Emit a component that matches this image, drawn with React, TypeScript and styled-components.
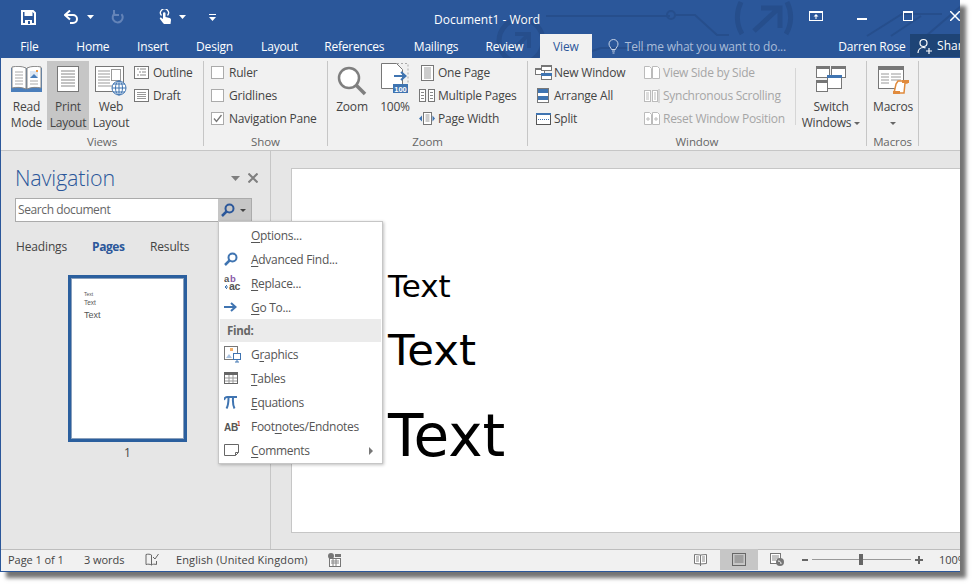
import React from "react";
import styled, { createGlobalStyle } from "styled-components";

const Global = createGlobalStyle`
  html, body { margin: 0; padding: 0; background: #fff; }
  body { min-height: 587px; font-family: "Open Sans", "Noto Sans", "Liberation Sans", sans-serif; font-size: 12px; color: #444; }
  #root { height: 587px; overflow: hidden; }
  svg { display: block; flex: none; }
`;

const Window = styled.div`
  position: relative; width: 960px; height: 572px; box-sizing: border-box; overflow: hidden;
  display: flex; flex-direction: column; background: #e6e6e6;
  border-left: 1px solid #2b579a; border-bottom: 1px solid #2b579a;
  box-shadow: 6px 6px 4px #747474;
`;
const Header = styled.header`
  position: relative; height: 58px; background: #2b579a; color: #fff; flex: none;
`;
const Circuit = styled.svg`position: absolute; left: 0; top: 0;`;
const TitleRow = styled.div`
  position: relative; height: 34px; display: flex; align-items: center;
`;
const Qat = styled.div`display: flex; align-items: center; padding-left: 20px; width: 427px; box-sizing: border-box;`;
const QatBtn = styled.span<{ $w: number }>`display: flex; align-items: center; width: ${p => p.$w}px;`;
const QatGap = styled.span<{ $w: number }>`display: block; width: ${p => p.$w}px;`;
const DocTitle = styled.div`width: 132px; text-align: center; font-size: 12px; margin-top: 4px; white-space: nowrap;`;
const WinControls = styled.div`display: flex; align-items: center; margin-left: 257px; margin-top: -2px;`;
const WinBtn = styled.span<{ $w: number }>`display: flex; width: ${p => p.$w}px;`;
const TabRow = styled.nav`position: relative; display: flex; height: 24px; padding-left: 2px;`;
const Tab = styled.div<{ $w: number; $active?: boolean }>`
  width: ${p => p.$w}px; text-align: center; line-height: 26px; font-size: 12px; letter-spacing: -0.2px;
  ${p => p.$active ? "background: #f1f1f1; color: #2b579a;" : ""}
`;
const TellMe = styled.div`
  display: flex; align-items: center; gap: 6px; padding-left: 16px; width: 247px; box-sizing: border-box;
  color: #a9bcd8; font-size: 12px; letter-spacing: -0.2px;
`;
const User = styled.div`width: 72px; line-height: 26px; letter-spacing: -0.2px;`;
const Share = styled.div`
  display: flex; align-items: center; gap: 5px; width: 50px; height: 23px; padding-left: 7px; box-sizing: border-box;
  background: #1e4476; white-space: nowrap; overflow: hidden;
`;
const Ribbon = styled.section`
  height: 93px; flex: none; box-sizing: border-box; display: flex; background: #f1f1f1;
  border-bottom: 1px solid #c6c6c6; padding-top: 3px;
`;
const Group = styled.div<{ $w: number }>`
  width: ${p => p.$w}px; height: 85px; box-sizing: border-box; flex: none;
  border-right: 1px solid #c6c6c6; display: flex; flex-direction: column;
`;
const GroupBody = styled.div<{ $pl: number }>`height: 73px; display: flex; align-items: flex-start; padding-left: ${p => p.$pl}px;`;
const GroupLabel = styled.div`height: 12px; line-height: 16px; text-align: center; color: #666; font-size: 11.5px; letter-spacing: -0.1px;`;
const BigBtn = styled.div<{ $w: number; $on?: boolean; $ml?: number }>`
  width: ${p => p.$w}px; height: 69px; display: flex; flex-direction: column; align-items: center; flex: none;
  background: ${p => p.$on ? "#c6c6c6" : "transparent"}; margin-right: 2px; margin-left: ${p => p.$ml ?? 0}px;
  white-space: nowrap;
`;
const BigIcon = styled.div<{ $pt?: number }>`height: 38px; flex: none; box-sizing: border-box; padding-top: ${p => p.$pt ?? 5}px;`;
const BigText = styled.div`line-height: 16px; text-align: center; letter-spacing: -0.2px;`;
const Caret = styled.span<{ $ml?: number }>`
  display: inline-block; width: 0; height: 0; border: 3px solid transparent; border-top: 3px solid #666; border-bottom: 0; vertical-align: 2px; margin-left: ${p => p.$ml ?? 3}px;
`;
const Stack = styled.div<{ $ml?: number; $w?: number }>`
  display: flex; flex-direction: column; flex: none; margin-left: ${p => p.$ml ?? 0}px;
  ${p => p.$w ? `width: ${p.$w}px;` : ""}
`;
const Small = styled.div<{ $dis?: boolean; $gap?: number }>`
  height: 23px; display: flex; align-items: center; gap: ${p => p.$gap ?? 4}px; white-space: nowrap;
  letter-spacing: ${p => p.$dis ? "-0.27px" : "-0.22px"};
  color: ${p => p.$dis ? "#a6a6a6" : "#444"};
`;
const SmallIcon = styled.span`width: 16px; display: flex; justify-content: center; flex: none;`;
const Check = styled.span`
  width: 11px; height: 11px; border: 1px solid #ababab; background: #fff; flex: none; display: block; position: relative;
`;
const WinSep = styled.div`width: 1px; height: 57px; background: #d6d6d6; margin: 7px 0 0 7px; flex: none;`;

const Body = styled.div`flex: 1; display: flex; min-height: 0; position: relative;`;
const Nav = styled.aside`
  width: 270px; flex: none; box-sizing: border-box; border-right: 1px solid #c6c6c6; padding: 13px 0 0 14px; background: #e6e6e6;
`;
const NavHead = styled.div`display: flex; align-items: center; height: 28px;`;
const NavTitle = styled.div`font-size: 21.5px; font-weight: 300; color: #2b579a; width: 216px; line-height: 28px; letter-spacing: -0.15px;`;
const NavHeadGap = styled.span`display: block; width: 8px;`;
const Search = styled.div`
  width: 237px; height: 24px; box-sizing: border-box; margin-top: 6px; display: flex; border: 1px solid #ababab; background: #fff;
`;
const SearchInput = styled.div`flex: 1; padding-left: 2px; line-height: 21px; color: #666; letter-spacing: -0.4px;`;
const SearchBtn = styled.div`width: 33px; background: #c6c6c6; display: flex; align-items: center; gap: 5px; padding-left: 3px; box-sizing: border-box;`;
const NavTabs = styled.div`display: flex; margin-top: 13px; height: 24px; line-height: 24px; margin-left: 1px;`;
const NavTab = styled.div<{ $w: number; $on?: boolean }>`
  width: ${p => p.$w}px; font-weight: ${p => p.$on ? 700 : 400}; color: ${p => p.$on ? "#2b579a" : "#444"}; letter-spacing: ${p => p.$on ? "-0.4px" : "-0.15px"};
`;
const Thumb = styled.div`
  margin: 16px 0 0 53px; width: 119px; height: 167px; box-sizing: border-box; border: 3px solid #2b5f9e; outline: 1px solid #e6e6e6;
  box-shadow: inset 0 0 0 1px #8aa0bc; background: #fff; padding: 13px 0 0 13px; color: #555; font-family: "Liberation Sans", sans-serif;
`;
const ThumbLine = styled.div<{ $s: number; $h: number }>`font-size: ${p => p.$s}px; line-height: ${p => p.$h}px;`;
const ThumbNum = styled.div`width: 119px; margin-left: 53px; text-align: center; line-height: 16px; margin-top: 3px;`;

const Main = styled.main`flex: 1; padding: 17px 0 0 20px; min-width: 0;`;
const Page = styled.div`
  height: 365px; box-sizing: border-box; background: #fff; border: 1px solid #c6c6c6; border-right: 0; padding: 96px 0 0 96px;
  font-family: "DejaVu Sans", sans-serif; color: #000;
`;
const DocLine = styled.div<{ $s: number; $h: number }>`font-size: ${p => p.$s}px; line-height: ${p => p.$h}px;`;

const Menu = styled.div`
  position: absolute; left: 217px; top: 70px; width: 165px; height: 243px; box-sizing: border-box; background: #fff;
  border: 1px solid #c6c6c6; box-shadow: 1px 1px 3px rgba(0,0,0,.25); padding: 1px 1px 0; z-index: 3;
`;
const MenuItem = styled.div`
  height: 24px; display: flex; align-items: center; position: relative; letter-spacing: -0.3px; color: #555;
  u { text-underline-offset: 2px; }
`;
const MenuIcon = styled.span`width: 30px; padding-left: 3px; box-sizing: border-box; flex: none; display: flex; margin-left: 1px;`;
const MenuHead = styled.div`height: 23px; line-height: 23px; background: #ebebeb; padding-left: 7px; font-weight: 700; color: #666; letter-spacing: -0.3px; font-size: 11.5px;`;
const MenuArrow = styled.span`
  position: absolute; right: 8px; top: 9px; width: 0; height: 0; border: 4px solid transparent; border-left: 4px solid #777; border-right: 0;
`;

const Status = styled.footer`
  height: 22px; flex: none; box-sizing: border-box; background: #f1f1f1; border-top: 1px solid #bdbdbd; display: flex; align-items: center;
  color: #444; font-size: 11px; position: relative; padding-bottom: 2px;
`;
const StatText = styled.span<{ $w: number; $pl?: number; $ls?: number }>`display: flex; align-items: center; width: ${p => p.$w}px; padding-left: ${p => p.$pl ?? 0}px; flex: none; box-sizing: border-box; letter-spacing: ${p => p.$ls ?? -0.05}px; white-space: nowrap;`;
const ViewBtn = styled.span<{ $on?: boolean; $w: number; $ml?: number; $mr?: number }>`
  width: ${p => p.$w}px; height: 21px; display: flex; align-items: center; justify-content: center; flex: none; background: ${p => p.$on ? "#c6c6c6" : "transparent"};
  margin: 0 ${p => p.$mr ?? 0}px 0 ${p => p.$ml ?? 0}px;
`;
const Slider = styled.div`
  width: 99px; height: 1px; background: #999; position: relative; flex: none; margin: 0 4px;
`;
const Thumbler = styled.span`position: absolute; left: 47px; top: -5px; width: 4px; height: 11px; background: #666;`;

const Blue = "#3f74b1";

const SaveIcon = () => <svg width="15" height="15" viewBox="0 0 15 15"><path d="M1 1h11l2 2v11H1z" fill="none" stroke="#fff" strokeWidth="2" /><rect x="3.5" y="1" width="8" height="5" fill="#fff" /><rect x="4" y="10" width="7" height="4" fill="#fff" /><rect x="7" y="11" width="2" height="3" fill="#2b579a" /></svg>;
const UndoIcon = () => <svg width="15" height="14" viewBox="0 0 15 14"><path d="M2 5h7a4 4 0 0 1 0 8H6" fill="none" stroke="#fff" strokeWidth="2" /><path d="M6 0.5 1 5l5 4.5" fill="none" stroke="#fff" strokeWidth="2" /></svg>;
const RedoIcon = () => <svg width="14" height="14" viewBox="0 0 14 14"><path d="M4 3.200a5 5 0 1 0 6.500 1" fill="none" stroke="#6484b8" strokeWidth="2" /><path d="M3 0v5h5" fill="none" stroke="#6484b8" strokeWidth="2" /></svg>;
const TouchIcon = () => <svg width="15" height="17" viewBox="0 0 15 17"><path d="M5 14 2 10c-.7-1 .7-2 1.500-1L5 10V4.500a1.200 1.200 0 0 1 2.500 0V8l4 1c1 .3 1.500 1 1.500 2l-.5 4H6z" fill="#fff" /><path d="M3.500 6.500a4 4 0 1 1 6 0" fill="none" stroke="#fff" strokeWidth="1.300" /></svg>;
const WhiteCaret = () => <svg width="7" height="4" viewBox="0 0 7 4"><path d="M0 0h7L3.500 4z" fill="#fff" /></svg>;
const QatCustom = () => <svg width="7" height="7" viewBox="0 0 7 7"><rect y="0" width="7" height="1" fill="#fff" /><path d="M0 3h7L3.500 7z" fill="#fff" /></svg>;
const RibbonDisp = () => <svg width="14" height="10" viewBox="0 0 14 10"><rect x=".5" y=".5" width="13" height="9" fill="none" stroke="#fff" /><rect x="0" y="0" width="14" height="2" fill="#fff" /><path d="M7 3 4.500 5.500h2V8h1V5.500h2z" fill="#fff" /></svg>;
const Minimize = () => <svg width="10" height="10" viewBox="0 0 10 10"><rect y="7" width="10" height="2" fill="#fff" /></svg>;
const Maximize = () => <svg width="10" height="10" viewBox="0 0 10 10"><rect x=".5" y=".5" width="9" height="9" fill="none" stroke="#fff" /><rect width="10" height="2" fill="#fff" /></svg>;
const CloseX = () => <svg width="10" height="10" viewBox="0 0 10 10"><path d="M0 0l10 10M10 0 0 10" stroke="#fff" strokeWidth="1.500" /></svg>;
const Bulb = () => <svg width="11" height="15" viewBox="0 0 11 15"><path d="M3.500 10.500C3 8.500 1 7.500 1 5a4.500 4.500 0 0 1 9 0c0 2.500-2 3.500-2.500 5.500z" fill="none" stroke="#c7d3e6" /><path d="M4 12h3M4.500 14h2" stroke="#c7d3e6" /></svg>;
const Person = () => <svg width="15" height="16" viewBox="0 0 15 16"><circle cx="6.500" cy="5" r="3.500" fill="none" stroke="#fff" strokeWidth="1.200" /><path d="M1 15c0-3 2-5.500 5.500-5.500 1 0 1.500.2 2 .4" fill="none" stroke="#fff" strokeWidth="1.200" /><path d="M9 13h6M12 10v6" stroke="#fff" strokeWidth="1.200" /></svg>;

const ReadIcon = () => <svg width="32" height="26" viewBox="0 0 32 26"><rect x="0" y="2" width="31" height="24" fill="#4a7ebb" /><path d="M1 1c4-1 10-1 14 1v21C11 21 5 21 1 22z" fill="#fff" stroke="#888" /><path d="M30 1c-4-1-10-1-14 1v21c4-2 10-2 14-1z" fill="#fff" stroke="#888" /><path d="M4 6h8M4 9h8M4 12h8M4 15h8M4 18h8M19 15h8M19 18h8" stroke="#aaa" /><rect x="19" y="5" width="8" height="7" fill="#dfe8f3" /><path d="M19 12l4-4 4 4z" fill="#4a7ebb" /><rect x="25" y="4" width="2" height="2" fill="#ee9944" /></svg>;
const PrintIcon = () => <svg width="22" height="26" viewBox="0 0 22 26"><rect x=".5" y=".5" width="21" height="25" fill="#fff" stroke="#777" /><path d="M4 5h14M4 8h14M4 11h14M4 14h14M4 17h14M4 20h14" stroke="#888" /></svg>;
const WebIcon = () => <svg width="32" height="30" viewBox="0 0 32 30"><rect x=".5" y=".5" width="28" height="25" fill="#fff" stroke="#777" /><path d="M3 5h12M3 8h12M3 11h12M3 14h12M3 17h12M3 20h15" stroke="#999" /><rect x="16.500" y="3.500" width="9" height="11" fill="#fff" stroke="#999" /><circle cx="24" cy="22" r="7" fill="#fff" stroke="#3f74b1" /><path d="M17 22h14M18 18h12M18 26h12M24 15v14" stroke="#3f74b1" /><ellipse cx="24" cy="22" rx="3.500" ry="7" fill="none" stroke="#3f74b1" /></svg>;
const OutlineIcon = () => <svg width="15" height="13" viewBox="0 0 15 13"><rect x=".5" y=".5" width="14" height="12" fill="#fff" stroke="#777" /><path d="M3 3h2M6 3h6M5 6h2M8 6h4M3 9h2M6 9h6" stroke="#888" /></svg>;
const DraftIcon = () => <svg width="15" height="13" viewBox="0 0 15 13"><rect x=".5" y=".5" width="14" height="12" fill="#fff" stroke="#777" /><path d="M3 3.500h9M3 5.500h9M3 7.500h9M3 9.500h9" stroke="#999" /></svg>;
const CheckMark = () => <svg width="11" height="11" viewBox="0 0 11 11"><path d="M2 5.500 4.500 8.500 9.500 2" fill="none" stroke="#777" strokeWidth="1.300" /></svg>;
const ZoomIcon = () => <svg width="30" height="30" viewBox="0 0 30 30"><circle cx="12" cy="12" r="10" fill="#fff" stroke="#7f7f7f" strokeWidth="2.500" /><path d="M19 19l9 9" stroke="#7f7f7f" strokeWidth="3.500" /></svg>;
const HundredIcon = () => <svg width="28" height="32" viewBox="0 0 28 32"><path d="M.5.500h15l6 6v19H.5z" fill="#fff" stroke="#777" /><path d="M16 .5h11V20" fill="none" stroke="#aaa" strokeDasharray="2 2" /><path d="M13 13h11M20 9l4.500 4-4.500 4" fill="none" stroke="#3f74b1" strokeWidth="2" /><rect x="12" y="21" width="15" height="9" fill="#3f74b1" /><text x="19.500" y="28.500" fontSize="7.500" fontWeight="700" textAnchor="middle" fill="#fff" fontFamily="Liberation Sans">100</text></svg>;
const OnePage = () => <svg width="13" height="16" viewBox="0 0 13 16"><rect x=".5" y=".5" width="12" height="15" fill="#fff" stroke="#777" /><path d="M3 3h7M3 5h7M3 7h7M3 9h7M3 11h7M3 13h7" stroke="#999" /></svg>;
const MultiPage = () => <svg width="16" height="13" viewBox="0 0 16 13"><rect x=".5" y=".5" width="6" height="12" fill="#fff" stroke="#777" /><rect x="9.500" y=".5" width="6" height="12" fill="#fff" stroke="#777" /><path d="M2 3.500h3M2 6.500h3M2 9.500h3M11 3.500h3M11 6.500h3M11 9.500h3" stroke="#888" /></svg>;
const PageWidth = () => <svg width="16" height="13" viewBox="0 0 16 13"><rect x="4.500" y=".5" width="8" height="12" fill="#fff" stroke="#777" /><path d="M6.500 3h4M6.500 5h4M6.500 7h4M6.500 9h4" stroke="#999" /><path d="M3 3.500 0 6.500l3 3zM13.500 3.500l2.500 3-2.500 3z" fill="#3f74b1" /></svg>;
const NewWin = () => <svg width="17" height="15" viewBox="0 0 17 15"><rect x=".5" y="3.500" width="9" height="6" fill="#fff" stroke="#777" /><rect x="0" y="3" width="10" height="2" fill="#777" /><rect x="6.500" y=".5" width="10" height="5" fill="#fff" stroke="#777" /><rect x="6" y="0" width="11" height="2" fill="#777" /><rect x="6.500" y="8.500" width="10" height="6" fill="#fff" stroke="#777" /><rect x="6" y="8" width="11" height="3" fill="#3f74b1" /></svg>;
const ArrangeAll = () => <svg width="12" height="15" viewBox="0 0 12 15"><rect x=".5" y=".5" width="11" height="14" fill="#fff" stroke="#777" /><rect x="1" y="1" width="10" height="4" fill="#3f74b1" /><rect x="1" y="8" width="10" height="4" fill="#3f74b1" /></svg>;
const SplitIcon = () => <svg width="15" height="12" viewBox="0 0 15 12"><rect x=".5" y=".5" width="14" height="11" fill="#fff" stroke="#555" /><rect x="0" y="0" width="15" height="2" fill="#3f74b1" /><path d="M2 6.500h11" stroke="#3f74b1" strokeDasharray="1 1" /></svg>;
const SideIcon = () => <svg width="16" height="13" viewBox="0 0 16 13"><path d="M.5.500h5l2 2v10h-7zM8.500.500h5l2 2v10h-7z" fill="#fff" stroke="#bbb" /></svg>;
const SyncIcon = () => <svg width="16" height="14" viewBox="0 0 16 14"><rect x=".5" y="1.500" width="6" height="11" fill="#fff" stroke="#bbb" /><rect x="8.500" y="1.500" width="5" height="11" fill="#fff" stroke="#bbb" /><path d="M2 4h3M2 6h3M2 8h3M2 10h3M10 4h2M10 6h2M10 8h2M10 10h2M15 0v14" stroke="#bbb" /></svg>;
const ResetIcon = () => <svg width="16" height="13" viewBox="0 0 16 13"><path d="M.5.500h5l2 2v10h-7zM8.500.500h5l2 2v10h-7z" fill="#fff" stroke="#bbb" /><path d="M2 7h4M4 5v4M10 7h4M12 5v4" stroke="#bbb" /></svg>;
const SwitchIcon = () => <svg width="30" height="26" viewBox="0 0 30 26"><rect x=".5" y=".5" width="13" height="11" fill="#fff" stroke="#777" /><rect width="14" height="3" fill="#777" /><rect x="15.500" y=".5" width="14" height="11" fill="#fff" stroke="#777" /><rect x="15" width="15" height="3" fill="#777" /><rect x=".5" y="14.500" width="11" height="11" fill="#fff" stroke="#777" /><rect y="14" width="12" height="3" fill="#777" /><rect x="11.500" y="9.500" width="14" height="13" fill="#fff" stroke="#777" /><rect x="11" y="9" width="15" height="3" fill="#3f74b1" /></svg>;
const MacroIcon = () => <svg width="31" height="29" viewBox="0 0 31 29"><rect x=".5" y=".5" width="25" height="22" fill="#fff" stroke="#777" /><rect width="26" height="4" fill="#777" /><path d="M3 8h8M13 8h10M3 11h8M13 11h10M3 14h8M13 14h10M3 17h8" stroke="#999" /><path d="M20 15h10l-1 2h-2l-1 10H16l2-9z" fill="#fff" stroke="#e08a3c" strokeWidth="1.500" /><rect x="24" y="14" width="7" height="3" fill="#e08a3c" /><rect x="15" y="25" width="7" height="3" fill="#e08a3c" /></svg>;
const Triangle = () => <svg width="9" height="5" viewBox="0 0 9 5"><path d="M0 0h9L4.500 5z" fill="#7f7f7f" /></svg>;
const NavClose = () => <svg width="10" height="10" viewBox="0 0 10 10"><path d="M.5.500l9 9M9.500.500l-9 9" stroke="#7f7f7f" strokeWidth="2" /></svg>;
const Magnifier = ({ c = "#2b579a", s = 14 }: { c?: string; s?: number }) => <svg width={s} height={s} viewBox="0 0 14 14"><circle cx="8.500" cy="5.500" r="4" fill="none" stroke={c} strokeWidth="2" /><path d="M5.500 8.500 1 13" stroke={c} strokeWidth="2.500" /></svg>;
const SearchCaret = () => <svg width="6" height="3" viewBox="0 0 6 3"><path d="M0 0h6L3 3z" fill="#444" /></svg>;
const ReplaceIcon = () => <svg width="17" height="18" viewBox="0 0 17 18"><text x="0" y="8" fontSize="9.500" fontWeight="700" fill="#555" fontFamily="Liberation Sans">a</text><text x="6" y="8" fontSize="9.500" fontWeight="700" fill="#8a5aa8" fontFamily="Liberation Sans">b</text><text x="5" y="16" fontSize="10.500" fontWeight="700" fill="#555" fontFamily="Liberation Sans">ac</text><path d="M1 13h3M1 13l2-2M1 13l2 2" stroke="#3f74b1" fill="none" /></svg>;
const GoArrow = () => <svg width="13" height="10" viewBox="0 0 13 10"><path d="M0 5h11M7 1l4.500 4L7 9" fill="none" stroke="#3f74b1" strokeWidth="2" /></svg>;
const GraphicIcon = () => <svg width="17" height="17" viewBox="0 0 17 17"><rect x=".5" y=".5" width="13" height="13" fill="#fff" stroke="#777" /><path d="M2 12l3-4 3 4z" fill="#a9c2e0" /><rect x="6" y="2" width="3" height="3" fill="#f2b06b" /><rect x="9.500" y="7.500" width="7" height="6" fill="#fff" stroke="#3f74b1" /><path d="M11 16h4M13 14v2" stroke="#3f74b1" /></svg>;
const TableIcon = () => <svg width="14" height="12" viewBox="0 0 14 12"><rect x=".5" y=".5" width="13" height="11" fill="#fff" stroke="#666" /><rect width="14" height="3" fill="#666" /><path d="M5 3v8M9 3v8M1 6h12M1 9h12" stroke="#999" /></svg>;
const PiIcon = () => <svg width="13" height="13" viewBox="0 0 13 13"><path d="M0 4c.6-2 1.500-3 3-3h10M4.500 2C4.500 7 4 10 2.500 12.500M9 2c-.3 4 0 7.500 1.500 10.500" fill="none" stroke="#3f74b1" strokeWidth="2" /></svg>;
const FootIcon = () => <svg width="16" height="11" viewBox="0 0 16 11"><text x="0" y="10" fontSize="10" fontWeight="700" fill="#555" fontFamily="Liberation Sans">AB</text><text x="13" y="5" fontSize="6.500" fontWeight="700" fill="#c0392b" fontFamily="Liberation Sans">1</text></svg>;
const CommentIcon = () => <svg width="15" height="12" viewBox="0 0 15 12"><path d="M.5.500h14v8l-3 3H.5z" fill="#fff" stroke="#666" /><path d="M11.500 11.500v-3h3" fill="none" stroke="#666" /></svg>;
const ProofIcon = () => <svg width="14" height="14" viewBox="0 0 14 14"><path d="M6.500 2C5 1 3 1 1 1.500v10c2-.5 4-.5 5.500.5 1-1 3-1 5-.5V8M6.500 2v10" fill="none" stroke="#666" /><path d="M8 4l2 2 3.500-5" fill="none" stroke="#666" /></svg>;
const MacroRec = () => <svg width="14" height="14" viewBox="0 0 14 14"><circle cx="4" cy="3" r="3" fill="#777" /><rect x="2.500" y="5.500" width="11" height="8" fill="#fff" stroke="#777" /><rect x="8" y="1" width="6" height="3" fill="#777" /><path d="M4 8h8M4 10h8M6 6v7M9 6v7" stroke="#888" /></svg>;
const StatRead = () => <svg width="13" height="13" viewBox="0 0 13 13"><path d="M.5 1.500 6.500 2l6-.5v9l-6 .5-6-.5zM6.500 2v11" fill="#fff" stroke="#777" /><path d="M2 4h3M2 6h3M2 8h3M8 4h3M8 6h3M8 8h3" stroke="#888" /></svg>;
const StatPrint = () => <svg width="14" height="13" viewBox="0 0 14 13"><rect x=".5" y=".5" width="13" height="12" fill="none" stroke="#666" /><path d="M2.500 3h9M2.500 5h9M2.500 7h9M2.500 9h9" stroke="#777" /></svg>;
const StatWeb = () => <svg width="14" height="13" viewBox="0 0 14 13"><rect x=".5" y=".5" width="10" height="10" fill="#fff" stroke="#777" /><path d="M2 3h7M2 5h7M2 7h4" stroke="#888" /><circle cx="10" cy="9" r="4" fill="#777" /><path d="M8 8c2 0 3 1 3 3" stroke="#fff" fill="none" /></svg>;
const Minus = () => <svg width="6" height="6" viewBox="0 0 6 6"><rect y="2" width="6" height="2" fill="#666" /></svg>;
const Plus = () => <svg width="8" height="8" viewBox="0 0 8 8"><path d="M0 4h8M4 0v8" stroke="#666" strokeWidth="2" /></svg>;

export default function App() {
  return (
    <>
      <Global />
      <Window>
        <Header>
          <Circuit width="960" height="58" viewBox="0 0 960 58" fill="none" stroke="#264e8c" strokeWidth="2">
            <circle cx="520" cy="41" r="22" strokeWidth="5" />
            <path d="M512 50l16-16M514 34h14v14" strokeWidth="4" />
            <path d="M545 16H669" />
            <circle cx="670" cy="15" r="4" />
            <path d="M674 15h20l22 20h12M570 58l30-10h50" />
            <path d="M740 2c-5 10-5 22 1 32M786 2c5 10 5 22-1 32" strokeWidth="5" />
            <path d="M753 31 778 8M760 8h19v20" strokeWidth="5" />
            <path d="M866 36l35-22h40M890 36l30-20M925 36l35-30" />
          </Circuit>
          <TitleRow>
            <Qat>
              <QatBtn $w={43}><SaveIcon /></QatBtn>
              <QatBtn $w={47}><UndoIcon /><QatGap $w={8} /><WhiteCaret /></QatBtn>
              <QatBtn $w={47}><RedoIcon /></QatBtn>
              <QatBtn $w={51}><TouchIcon /><QatGap $w={6} /><WhiteCaret /></QatBtn>
              <QatBtn $w={20}><QatCustom /></QatBtn>
            </Qat>
            <DocTitle>Document1 - Word</DocTitle>
            <WinControls>
              <WinBtn $w={48}><RibbonDisp /></WinBtn>
              <WinBtn $w={46}><Minimize /></WinBtn>
              <WinBtn $w={47}><Maximize /></WinBtn>
              <WinBtn $w={10}><CloseX /></WinBtn>
            </WinControls>
          </TitleRow>
          <TabRow>
            <Tab $w={53}>File</Tab>
            <Tab $w={74}>Home</Tab>
            <Tab $w={46}>Insert</Tab>
            <Tab $w={78}>Design</Tab>
            <Tab $w={52}>Layout</Tab>
            <Tab $w={98}>References</Tab>
            <Tab $w={66}>Mailings</Tab>
            <Tab $w={71}>Review</Tab>
            <Tab $w={52} $active>View</Tab>
            <TellMe><Bulb />Tell me what you want to do...</TellMe>
            <User>Darren Rose</User>
            <Share><Person />Share</Share>
          </TabRow>
        </Header>

        <Ribbon>
          <Group $w={203}>
            <GroupBody $pl={7}>
              <BigBtn $w={37}><BigIcon><ReadIcon /></BigIcon><BigText>Read<br />Mode</BigText></BigBtn>
              <BigBtn $w={42} $on><BigIcon><PrintIcon /></BigIcon><BigText>Print<br />Layout</BigText></BigBtn>
              <BigBtn $w={40}><BigIcon><WebIcon /></BigIcon><BigText>Web<br />Layout</BigText></BigBtn>
              <Stack>
                <Small><SmallIcon><OutlineIcon /></SmallIcon>Outline</Small>
                <Small><SmallIcon><DraftIcon /></SmallIcon>Draft</Small>
              </Stack>
            </GroupBody>
            <GroupLabel>Views</GroupLabel>
          </Group>
          <Group $w={124}>
            <GroupBody $pl={7}>
              <Stack>
                <Small $gap={5}><Check />Ruler</Small>
                <Small $gap={5}><Check />Gridlines</Small>
                <Small $gap={5}><Check><CheckMark /></Check>Navigation Pane</Small>
              </Stack>
            </GroupBody>
            <GroupLabel>Show</GroupLabel>
          </Group>
          <Group $w={200}>
            <GroupBody $pl={6}>
              <BigBtn $w={36}><BigIcon><ZoomIcon /></BigIcon><BigText>Zoom</BigText></BigBtn>
              <BigBtn $w={32} $ml={7}><BigIcon $pt={2}><HundredIcon /></BigIcon><BigText>100%</BigText></BigBtn>
              <Stack $ml={6}>
                <Small $gap={3}><SmallIcon><OnePage /></SmallIcon>One Page</Small>
                <Small $gap={3}><SmallIcon><MultiPage /></SmallIcon>Multiple Pages</Small>
                <Small $gap={3}><SmallIcon><PageWidth /></SmallIcon>Page Width</Small>
              </Stack>
            </GroupBody>
            <GroupLabel>Zoom</GroupLabel>
          </Group>
          <Group $w={339}>
            <GroupBody $pl={7}>
              <Stack $w={109}>
                <Small $gap={3}><SmallIcon><NewWin /></SmallIcon>New Window</Small>
                <Small $gap={3}><SmallIcon><ArrangeAll /></SmallIcon>Arrange All</Small>
                <Small $gap={3}><SmallIcon><SplitIcon /></SmallIcon>Split</Small>
              </Stack>
              <Stack $w={144}>
                <Small $dis $gap={3}><SmallIcon><SideIcon /></SmallIcon>View Side by Side</Small>
                <Small $dis $gap={3}><SmallIcon><SyncIcon /></SmallIcon>Synchronous Scrolling</Small>
                <Small $dis $gap={3}><SmallIcon><ResetIcon /></SmallIcon>Reset Window Position</Small>
              </Stack>
              <WinSep />
              <BigBtn $w={70}><BigIcon><SwitchIcon /></BigIcon><BigText>Switch<br />Windows<Caret /></BigText></BigBtn>
            </GroupBody>
            <GroupLabel>Window</GroupLabel>
          </Group>
          <Group $w={52}>
            <GroupBody $pl={6}>
              <BigBtn $w={40}><BigIcon><MacroIcon /></BigIcon><BigText>Macros<br /><Caret $ml={0} /></BigText></BigBtn>
            </GroupBody>
            <GroupLabel>Macros</GroupLabel>
          </Group>
        </Ribbon>

        <Body>
          <Nav>
            <NavHead>
              <NavTitle>Navigation</NavTitle>
              <Triangle /><NavHeadGap /><NavClose />
            </NavHead>
            <Search>
              <SearchInput>Search document</SearchInput>
              <SearchBtn><Magnifier /><SearchCaret /></SearchBtn>
            </Search>
            <NavTabs>
              <NavTab $w={76}>Headings</NavTab>
              <NavTab $w={58} $on>Pages</NavTab>
              <NavTab $w={60}>Results</NavTab>
            </NavTabs>
            <Thumb>
              <ThumbLine $s={5} $h={7}>Text</ThumbLine>
              <ThumbLine $s={6.500} $h={9}>Text</ThumbLine>
              <ThumbLine $s={9} $h={16}>Text</ThumbLine>
            </Thumb>
            <ThumbNum>1</ThumbNum>
          </Nav>
          <Main>
            <Page>
              <DocLine $s={31} $h={43}>Text</DocLine>
              <DocLine $s={43.500} $h={84}>Text</DocLine>
              <DocLine $s={58} $h={88}>Text</DocLine>
            </Page>
          </Main>
          <Menu>
            <MenuItem><MenuIcon /><span><u>O</u>ptions...</span></MenuItem>
            <MenuItem><MenuIcon><Magnifier c={Blue} /></MenuIcon><span><u>A</u>dvanced Find...</span></MenuItem>
            <MenuItem><MenuIcon><ReplaceIcon /></MenuIcon><span><u>R</u>eplace...</span></MenuItem>
            <MenuItem><MenuIcon><GoArrow /></MenuIcon><span><u>G</u>o To...</span></MenuItem>
            <MenuHead>Find:</MenuHead>
            <MenuItem><MenuIcon><GraphicIcon /></MenuIcon><span>G<u>r</u>aphics</span></MenuItem>
            <MenuItem><MenuIcon><TableIcon /></MenuIcon><span><u>T</u>ables</span></MenuItem>
            <MenuItem><MenuIcon><PiIcon /></MenuIcon><span><u>E</u>quations</span></MenuItem>
            <MenuItem><MenuIcon><FootIcon /></MenuIcon><span>Foot<u>n</u>otes/Endnotes</span></MenuItem>
            <MenuItem><MenuIcon><CommentIcon /></MenuIcon><span><u>C</u>omments</span><MenuArrow /></MenuItem>
          </Menu>
        </Body>

        <Status>
          <StatText $w={83} $pl={7}>Page 1 of 1</StatText>
          <StatText $w={61}>3 words</StatText>
          <StatText $w={31}><ProofIcon /></StatText>
          <StatText $w={151} $ls={0.12}>English (United Kingdom)</StatText>
          <StatText $w={366}><MacroRec /></StatText>
          <ViewBtn $w={14} $mr={13}><StatRead /></ViewBtn>
          <ViewBtn $w={38} $on><StatPrint /></ViewBtn>
          <ViewBtn $w={14} $ml={12} $mr={18}><StatWeb /></ViewBtn>
          <Minus />
          <Slider><Thumbler /></Slider>
          <Plus />
          <StatText $w={30} $pl={16}>100%</StatText>
        </Status>
      </Window>
    </>
  );
}
